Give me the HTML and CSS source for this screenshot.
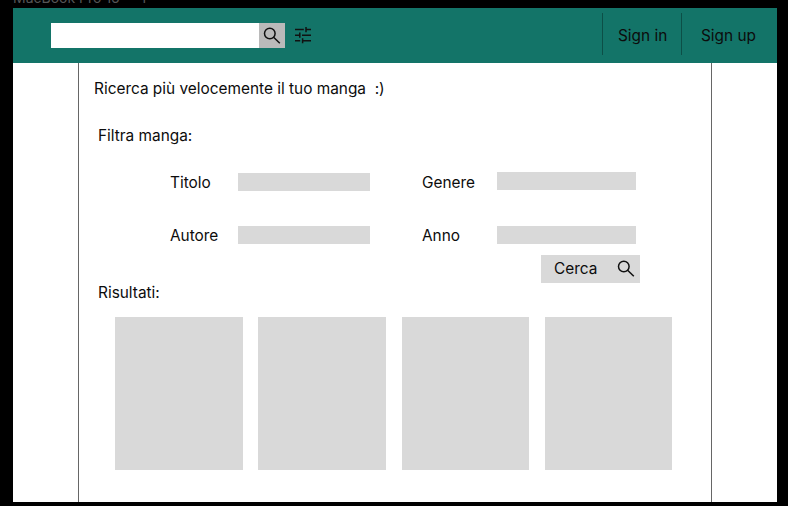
FILE: index.html
```html
<!DOCTYPE html>
<html lang="it">
<head>
<meta charset="utf-8">
<title>Ricerca manga</title>
<link rel="stylesheet" href="styles.css">
</head>
<body>
<div class="frame-label">MacBook Pro 16" - 1</div>
<div class="frame">
  <header class="topbar">
    <div class="search">
      <div class="search-field"></div>
      <div class="search-button">
        <svg class="magnifier" viewBox="0 0 18 18"><circle cx="6.8" cy="6.5" r="5.3"/><path d="M10.6 10.2L16.8 16.3"/></svg>
      </div>
    </div>
    <svg class="tune" viewBox="0 0 18 18"><path d="M1 3.6H9.8M12 3.6H17M12 1V6.2M1 9.2H5.8M8 9.2H17M5.8 6.6V11.8M1 14.8H6.2M8.6 14.8H17M8.6 12.2V17.3"/></svg>
    <nav class="account">
      <a class="account-link sign-in">Sign in</a>
      <a class="account-link sign-up">Sign up</a>
    </nav>
  </header>
  <main class="content">
    <h1 class="title">Ricerca più velocemente il tuo manga&nbsp; :)</h1>
    <h2 class="heading">Filtra manga:</h2>
    <div class="filters">
      <label>Titolo</label><div class="field"></div>
      <label>Genere</label><div class="field wide raised"></div>
      <label>Autore</label><div class="field"></div>
      <label>Anno</label><div class="field wide"></div>
    </div>
    <div class="submit">
      <span>Cerca</span>
      <svg class="magnifier" viewBox="0 0 18 18"><circle cx="6.8" cy="6.5" r="5.3"/><path d="M10.6 10.2L16.8 16.3"/></svg>
    </div>
    <h2 class="heading results-heading">Risultati:</h2>
    <div class="results">
      <div class="card"></div><div class="card"></div><div class="card"></div><div class="card"></div>
    </div>
  </main>
</div>
</body>
</html>
```
FILE: styles.css
```css
* { box-sizing: border-box; }
body {
  margin: 0;
  height: 506px;
  overflow: hidden;
  background: #000;
  color: #0c0c0c;
  font: 15.4px/20px Inter, "Liberation Sans", sans-serif;
}
h1, h2 { margin: 0; font: inherit; }
svg { fill: none; stroke: #111; stroke-width: 1.5; flex: none; }
.frame-label {
  height: 18px;
  margin-top: -10px;
  padding-left: 13px;
  color: #555;
  font-size: 14px;
  line-height: 16px;
  white-space: pre;
}
.frame {
  width: 764px;
  height: 493.5px;
  margin-left: 13px;
  background: #fff;
  display: flex;
  flex-direction: column;
}
.topbar {
  height: 55px;
  flex: none;
  display: flex;
  align-items: center;
  padding-left: 37.5px;
  background: #137468;
}
.search { display: flex; width: 234.7px; height: 25px; }
.search-field { flex: 1; background: #fff; }
.search-button {
  width: 26.5px;
  background: #bababa;
  display: flex;
  align-items: center;
  justify-content: center;
}
.magnifier { width: 18px; height: 18px; }
.tune { width: 18px; height: 18px; margin: 0 0 2px 8.5px; }
.account { margin-left: auto; display: flex; height: 42px; margin-bottom: 3px; }
.account-link {
  border-left: 1px solid #0c4f47;
  padding-top: 13px;
  padding-left: 15px;
}
.sign-in { width: 79px; }
.sign-up { width: 96px; padding-left: 19px; }
.content {
  flex: 1;
  margin: 0 65px;
  border: solid #666;
  border-width: 0 1px;
  display: flex;
  flex-direction: column;
}
.title { margin: 16px 0 0 15px; }
.heading { margin: 27px 0 0 19px; }
.filters {
  display: grid;
  grid-template-columns: 68.3px 183.7px 75.3px 139px;
  row-gap: 33px;
  margin: 27px 0 0 91px;
}
.field {
  width: 132px;
  height: 18.5px;
  margin-top: -2px;
  align-self: center;
  background: #d9d9d9;
}
.wide { width: 139px; }
.raised { margin-top: -4px; }
.submit {
  width: 99px;
  height: 28px;
  margin: 9px 0 0 462px;
  padding: 0 5px 0 13px;
  display: flex;
  align-items: center;
  justify-content: space-between;
  background: #d9d9d9;
}
.results-heading { margin-top: 0; }
.results {
  display: grid;
  grid-template-columns: repeat(4, 127.8px);
  column-gap: 15.3px;
  margin: 14px 0 0 36.4px;
}
.card { height: 152.5px; background: #d9d9d9; }
```
